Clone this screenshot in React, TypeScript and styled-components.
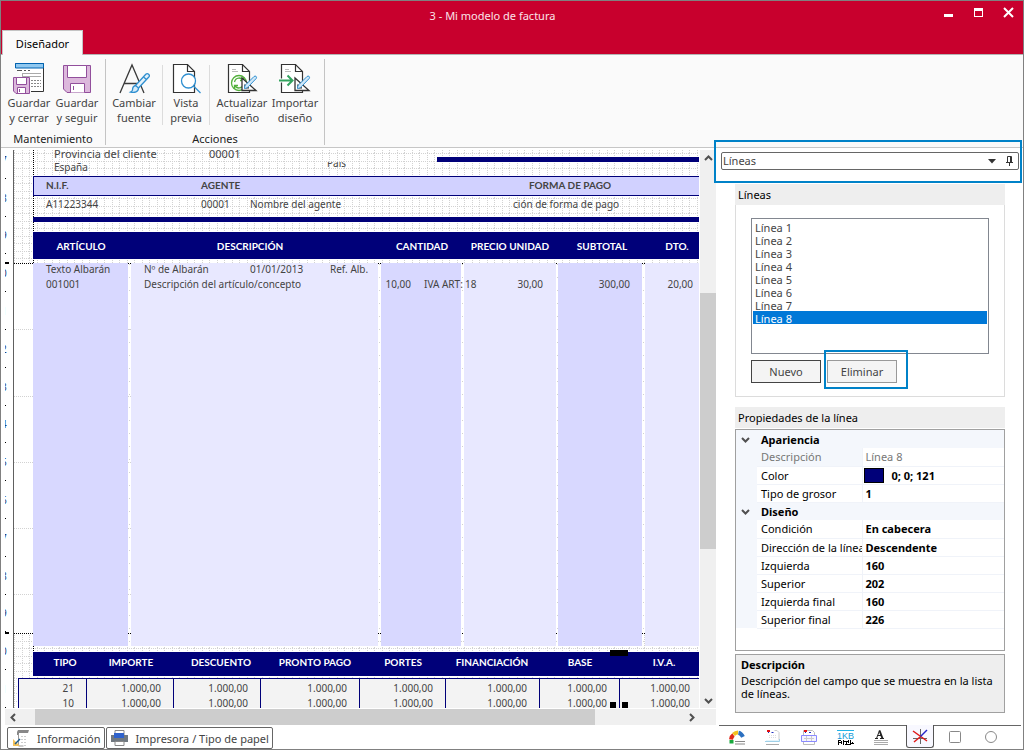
import React from "react";
import styled, { createGlobalStyle, css } from "styled-components";

const navy = "#000079";
const accent = "#0082c8";

const GlobalStyle = createGlobalStyle`
  *, *::before, *::after { box-sizing: border-box; }
  body {
    margin: 0;
    background: #fff;
    color: #444;
    font: 11px/15px "Noto Sans", "Open Sans", sans-serif;
  }
  button, select { font: inherit; color: inherit; }
  button { padding: 0; border: 0; background: none; }
  svg { display: block; }
`;

const Window = styled.div`
  display: flex;
  flex-direction: column;
  min-height: 100vh;
  border: 1px solid #808080;
  background: #fff;
`;

/* ---------- title bar ---------- */

const Header = styled.header`
  background: #c8002d;
  border-bottom: 1px solid #b4b4b4;
`;

const TitleBar = styled.div`
  display: flex;
  height: 29px;
`;

const Title = styled.h1`
  flex: 1;
  margin: 0;
  padding-left: 50px;
  font-size: 11px;
  font-weight: 400;
  line-height: 30px;
  text-align: center;
  color: #fbe4e9;
`;

const WindowControls = styled.div`
  display: flex;
  width: 89px;
`;

const ControlButton = styled.button`
  display: flex;
  justify-content: center;
  width: 30px;
  padding-top: 6px;
`;

const RibbonTab = styled.button`
  display: block;
  width: 81px;
  height: 25px;
  margin: 0 0 -1px 1px;
  border: 1px solid #c4c4c4;
  border-bottom: 0;
  background: #fafafa;
  color: #000;
`;

/* ---------- ribbon ---------- */

const Ribbon = styled.div`
  display: flex;
  padding: 4px 0 2px;
  background: #fafafa;
  border-bottom: 1px solid #c6c6c6;
`;

const RibbonGroup = styled.section<{ $width: number }>`
  display: flex;
  flex-direction: column;
  width: ${(p) => p.$width}px;
  height: 86px;
  border-right: 1px solid #c4c4c4;
`;

const GroupTools = styled.div`
  display: flex;
  flex: 1;
`;

const GroupLabel = styled.div`
  text-align: center;
  line-height: 13px;
  color: #222;
`;

const ToolButton = styled.button<{ $width: number; $divider?: boolean }>`
  display: flex;
  flex-direction: column;
  align-items: center;
  width: ${(p) => p.$width}px;
  height: 60px;
  margin-top: 6px;
  border-right: ${(p) => (p.$divider ? "1px solid #dcdcdc" : "0")};
  line-height: 15px;
  white-space: pre-line;
  svg { margin: -3px 0 1px; flex: none; }
`;

/* ---------- work area ---------- */

const WorkArea = styled.div`
  display: flex;
  flex: 1;
`;

const Designer = styled.main`
  display: flex;
  flex: 1;
  flex-direction: column;
  min-width: 0;
  padding: 2px 0 0 4px;
`;

const CanvasRow = styled.div`
  display: flex;
  flex: 1;
  min-height: 558px;
  border-bottom: 1px solid #fff;
`;

const Ruler = styled.div`
  position: relative;
  display: flex;
  width: 9px;
  overflow: hidden;
  border-right: 1px solid #606060;
`;

const RulerScale = styled.div`
  display: flex;
  flex-direction: column;
  height: 567px;
  margin: -9px 0 0 -4px;
`;

const RulerUnit = styled.div`
  display: flex;
  flex: 1;
  flex-direction: column;
  justify-content: center;
  align-items: flex-start;
  position: relative;
  width: 6px;
  font-size: 10px;
  line-height: 12px;
  color: #1c3c78;
  &::after {
    content: "";
    position: absolute;
    right: 1px;
    bottom: 0;
    width: 1px;
    height: 1px;
    background: #000;
  }
`;

const SectionMark = styled.i<{ $y: number }>`
  position: absolute;
  left: 0;
  top: ${(p) => p.$y}px;
  width: 4px;
  height: 2px;
  background: #000;
`;

const Canvas = styled.div`
  position: relative;
  flex: 1;
  overflow: hidden;
  background: #fff;
`;

const GridLayer = styled.svg`
  position: absolute;
  inset: 0;
  width: 100%;
  height: 100%;
`;

const Block = styled.div<{ $x: number; $y: number; $w?: number; $h: number; $fill: string }>`
  position: absolute;
  left: ${(p) => p.$x}px;
  top: ${(p) => p.$y}px;
  height: ${(p) => p.$h}px;
  background: ${(p) => p.$fill};
  ${(p) => (p.$w ? css`width: ${p.$w}px;` : css`right: 0;`)}
`;

const CaptionBand = styled(Block)`
  border: 1px solid ${navy};
  border-right: 0;
`;

type Align = "left" | "center" | "right";

const Field = styled.span<{ $x: number; $y: number; $align?: Align; $bold?: boolean; $light?: boolean; $large?: boolean }>`
  position: absolute;
  left: ${(p) => p.$x}px;
  top: ${(p) => p.$y}px;
  font-size: ${(p) => (p.$large ? 11 : 10)}px;
  line-height: 14px;
  font-weight: ${(p) => (p.$bold ? 700 : 400)};
  color: ${(p) => (p.$light ? "#fff" : "#444")};
  white-space: nowrap;
  ${(p) => p.$bold && css`font-family: Lato, "Noto Sans", sans-serif;`}
  ${(p) => p.$align === "center" && css`transform: translateX(-50%);`}
  ${(p) => p.$align === "right" && css`transform: translateX(-100%);`}
`;

const ClippedField = styled(Field)`
  height: 7px;
  overflow: hidden;
  line-height: 2px;
`;

const Totals = styled.table`
  position: absolute;
  left: 4px;
  right: 0;
  top: 528px;
  table-layout: fixed;
  width: calc(100% - 4px);
  border-collapse: collapse;
  border-top: 1px solid ${navy};
  border-left: 1px solid ${navy};
  background: #f3f3f3;
  td {
    height: 15px;
    padding: 0 12px 0 0;
    border-right: 1px solid ${navy};
    font-size: 10px;
    line-height: 15px;
    text-align: right;
  }
  td:last-child { padding-right: 9px; border-right: 0; }
  tr:first-child td { height: 17px; padding-top: 2px; }
`;

/* ---------- scroll bars ---------- */

const VScroll = styled.div`
  display: flex;
  flex-direction: column;
  justify-content: space-between;
  position: relative;
  width: 17px;
  border-left: 1px solid #fff;
  background: #f0f0f0;
`;

const HScroll = styled.div`
  display: flex;
  justify-content: space-between;
  position: relative;
  height: 16px;
  padding-right: 17px;
  background: #f0f0f0;
`;

const ScrollButton = styled.button`
  display: flex;
  align-items: center;
  justify-content: center;
  width: 16px;
  height: 16px;
`;

const VThumb = styled.div`
  position: absolute;
  left: 0;
  right: 0;
  top: 143px;
  height: 256px;
  background: #cdcdcd;
`;

const HThumb = styled.div`
  position: absolute;
  top: 0;
  bottom: 0;
  left: 30px;
  width: 560px;
  background: #cdcdcd;
`;

const PageTabs = styled.nav`
  display: flex;
  gap: 1px;
  padding: 2px 0 0 2px;
`;

const PageTab = styled.button`
  display: flex;
  align-items: center;
  gap: 8px;
  height: 22px;
  padding: 0 3px 0 4px;
  border: 1px solid #666;
  border-radius: 2px;
  line-height: 15px;
`;

/* ---------- side panel ---------- */

const SidePanel = styled.aside`
  display: flex;
  flex-direction: column;
  width: 307px;
  padding: 4px 2px 0 3px;
`;

const ComboFrame = styled.div`
  position: relative;
  margin: 0 2px;
  &::before {
    content: "";
    position: absolute;
    inset: -12px -3px -13px -7px;
    border: 2px solid ${accent};
    pointer-events: none;
  }
`;

const Combo = styled.div`
  display: flex;
  align-items: center;
  gap: 4px;
  height: 18px;
  border: 1px solid #666;
  border-radius: 2px;
  background: #fff;
`;

const ComboSelect = styled.select`
  flex: 1;
  height: 16px;
  padding: 0 1px;
  border: 0;
  background: none;
  appearance: none;
  line-height: 16px;
`;

const PinButton = styled.button`
  display: flex;
  justify-content: center;
  width: 18px;
`;

const Group = styled.section`
  margin: 14px 16px 0;
`;

const GroupTitle = styled.h2`
  margin: 0;
  padding-left: 3px;
  background: #eee;
  color: #000;
  font-size: 11px;
  font-weight: 400;
  line-height: 21px;
`;

const GroupBody = styled.div`
  padding: 13px 15px;
  border: 1px solid #dcdcdc;
  border-top: 0;
`;

const LineList = styled.select`
  display: block;
  width: 100%;
  height: 136px;
  padding: 1px;
  border: 1px solid #828790;
  border-radius: 0;
  outline: 0;
  background: #fff;
  overflow: hidden;
  option {
    height: 13px;
    min-height: 13px;
    padding: 0 2px;
    line-height: 13px;
    color: #444;
  }
  option:checked {
    background: #0078d7 linear-gradient(#0078d7, #0078d7);
    color: #fff;
  }
`;

const ButtonRow = styled.div`
  display: flex;
  gap: 6px;
  margin-top: 6px;
`;

const PushButton = styled.button<{ $muted?: boolean }>`
  width: 70px;
  height: 23px;
  border: 1px solid ${(p) => (p.$muted ? "#999" : "#444")};
  background: #f4f4f4;
`;

const Highlight = styled.div`
  position: relative;
  &::before {
    content: "";
    position: absolute;
    inset: -10px -11px -6px -3px;
    border: 2px solid ${accent};
    pointer-events: none;
  }
`;

const PropertyGroup = styled(Group)`
  margin-top: 10px;
`;

const PropertyFrame = styled.div`
  height: 222px;
  margin-top: 1px;
  border: 1px solid #a0a0a0;
`;

const PropertyTable = styled.table`
  width: 100%;
  table-layout: fixed;
  border-collapse: collapse;
  color: #000;
  line-height: 17px;
  text-align: left;
  th, td { height: 18px; padding: 0; overflow: hidden; white-space: nowrap; }
  col:nth-child(1) { width: 21px; }
  col:nth-child(2) { width: 105px; }
`;

const CategoryRow = styled.tr`
  background: #f4f7fc;
  th { padding-left: 4px; font-weight: 700; }
  td svg { margin: 0 5px; }
`;

const PropertyRow = styled.tr<{ $readOnly?: boolean }>`
  color: ${(p) => (p.$readOnly ? "#777" : "#000")};
  td:first-child { background: #f4f7fc; }
  th, td + th + td { border-bottom: 1px solid #f0f3f9; }
  th {
    padding-left: 4px;
    border-right: 1px solid #f0f3f9;
    font-weight: 400;
    background: ${(p) => (p.$readOnly ? "#f4f7fc" : "#fff")};
  }
  td + th + td { padding-left: 3px; font-weight: ${(p) => (p.$readOnly ? 400 : 700)}; }
`;

const ColorValue = styled.span`
  display: flex;
  align-items: center;
  gap: 8px;
  margin-left: -2px;
  &::before {
    content: "";
    width: 20px;
    height: 15px;
    border: 1px solid #000;
    background: ${navy};
  }
`;

const HelpBox = styled.div`
  height: 59px;
  margin-top: 3px;
  padding: 2px 5px;
  border: 1px solid #a0a0a0;
  background: #eee;
  color: #000;
  line-height: 13px;
  h3 { margin: 0 0 2px; font-size: 11px; line-height: 15px; }
  p { margin: 0; }
`;

const ToolTabs = styled.nav`
  display: flex;
  height: 24px;
  margin-top: auto;
  border-top: 1px solid #666;
`;

const ToolTab = styled.button<{ $active?: boolean }>`
  display: flex;
  align-items: center;
  justify-content: center;
  width: 36px;
  height: 22px;
  ${(p) => p.$active && css`
    width: 28px;
    height: 23px;
    margin: -1px 3px 0 7px;
    border: 1px solid #555;
    border-top: 0;
    border-radius: 0 0 3px 3px;
    background: #f8f8ff;
  `}
`;

/* ---------- icons ---------- */

const SaveCloseIcon = () => (
  <svg width="32" height="32" viewBox="0 0 32 32" fill="none">
    <path d="M2.500 6V1.500h28v28H18" fill="#fff" stroke="#333" />
    <path d="M2.500 1.500h28v4.500h-28z" fill="#90c8f0" stroke="#0063b1" />
    <path d="M4 8.500h5M11 8.500h2M15 8.500h2" stroke="#555" />
    <path d="M9 11.500h19M9.500 11v4M9 14.500h19" stroke="#aaa" />
    <path d="M18 18.500h10M18 21.500h10M18 24.500h10" stroke="#888" strokeDasharray="2 1" />
    <path d="M.500 15.500h16v16H3L.500 29z" fill="#dcb8dc" stroke="#924f9c" />
    <path d="M3.500 15.500h10v7h-10z" fill="#fff" stroke="#924f9c" />
    <path d="M4.500 31v-5.500h8V31" fill="#fff" stroke="#924f9c" />
    <path d="M6.500 27v3" stroke="#924f9c" />
  </svg>
);

const SaveIcon = () => (
  <svg width="32" height="32" viewBox="0 0 32 32" fill="none" stroke="#924f9c">
    <path d="M2.500 3.500h27v27H6L2.500 27z" fill="#dcb8dc" />
    <path d="M6.500 3.500h19v12h-19z" fill="#fff" />
    <path d="M9.500 30.500v-9h14v9" fill="#fff" />
    <path d="M12.500 24v4" />
  </svg>
);

const FontIcon = () => (
  <svg width="32" height="32" viewBox="0 0 32 32" fill="none">
    <path d="M2 31 14 3l12 28M6.500 21.500h13" stroke="#3a3a3a" strokeWidth="1.300" />
    <path d="M17.500 23.500 27.800 12.300c1.800-1.800 4.700.700 3 2.700L20.500 26" fill="#e4f2fb" stroke="#2f8fd0" strokeWidth="1.300" />
    <path d="M17.500 23.500c-2 .500-3 2.500-3 4.500 0 1-1 1.500-2 2 4 1 8 0 8-4zM25.500 15l3 2.500" fill="#d5ebfa" stroke="#2f8fd0" strokeWidth="1.300" />
  </svg>
);

const PreviewIcon = () => (
  <svg width="32" height="32" viewBox="0 0 32 32" fill="none">
    <path d="M3.500 2.500h14l7 7v21h-21z" fill="#fff" stroke="#333" strokeWidth="1.200" />
    <path d="M17.500 2.500v7h7" stroke="#333" strokeWidth="1.200" />
    <circle cx="18.500" cy="19" r="7" fill="#fff" stroke="#2f8fd0" strokeWidth="1.300" />
    <path d="m23.500 24 7 7" stroke="#2f8fd0" strokeWidth="1.300" />
  </svg>
);

const SheetOutline = () => (
  <>
    <path d="M2.500 2.500h14l7 7v21h-21z" fill="#fff" stroke="#333" strokeWidth="1.200" />
    <path d="M16.500 2.500v7h7" stroke="#333" strokeWidth="1.200" />
    <path d="M6 7.500h4M6 9.500h6" stroke="#bbb" />
  </>
);

const PenAndSquare = () => (
  <>
    <path d="M16 16v12.500h14z" fill="#fff" stroke="#333" strokeWidth="1.300" />
    <path d="M18.800 22.500v3.500h4z" stroke="#333" />
    <path d="M18.500 26.500c0-2 .500-3.500 2-4.500l7.500-7.500c1.500-1.300 3.400.500 2.200 2L22.500 24.500c-1 1.200-2.400 1.800-4 2z" fill="#cfe7f8" stroke="#2f8fd0" />
  </>
);

const RefreshIcon = () => (
  <svg width="32" height="32" viewBox="0 0 32 32" fill="none">
    <SheetOutline />
    <circle cx="13" cy="21" r="7.500" fill="#fff" stroke="#53b03c" strokeWidth="1.300" />
    <path d="M8.500 20c1-5 7-5 8.500-1.500M17.500 15v3.500H14M17.500 22c-1 5-7 5-8.500 1.500M8.500 27v-3.500H12" stroke="#53b03c" strokeWidth="1.300" />
    <PenAndSquare />
  </svg>
);

const ImportIcon = () => (
  <svg width="32" height="32" viewBox="0 0 32 32" fill="none">
    <SheetOutline />
    <path d="M0 18.500h13M8.500 13.500l5 5-5 5" stroke="#fff" strokeWidth="4" />
    <path d="M0 18.500h13M8.500 13.500l5 5-5 5" stroke="#33a35f" strokeWidth="2" />
    <PenAndSquare />
  </svg>
);

const arrowPaths = {
  up: "M1 6l3.500-3.500L8 6",
  down: "M1 3l3.500 3.500L8 3",
  left: "M6 1 2.500 4.500 6 8",
  right: "M3 1l3.500 3.500L3 8",
};

const Arrow = ({ to }: { to: keyof typeof arrowPaths }) => (
  <svg width="9" height="9" viewBox="0 0 9 9" fill="none">
    <path d={arrowPaths[to]} stroke="#505050" strokeWidth="2" />
  </svg>
);

const InfoIcon = () => (
  <svg width="17" height="17" viewBox="0 0 17 17" fill="none">
    <path d="M6 0h11l-1 3H7v2H5V2z" fill="#888" />
    <path d="M6.500 4v12h5" stroke="#999" />
    <path d="M9 6.500h6M9 9.500h6M9 12.500h6M9 15.500h6" stroke="#ccc" strokeDasharray="2 1" />
    <path d="M1 9v7h7z" fill="#f3c25b" />
    <path d="m3 14 5-5" stroke="#1d5c8c" strokeWidth="1.500" />
  </svg>
);

const PrinterIcon = () => (
  <svg width="17" height="16" viewBox="0 0 17 16">
    <path d="M4 .500h9V5H4z" fill="#fff" stroke="#888" />
    <path d="M0 5h17v7H0z" fill="#707880" />
    <path d="M3 3h10v5H3z" fill="#2f62cc" />
    <path d="M4 11.500h9v4H4z" fill="#fff" stroke="#888" />
  </svg>
);

const PinIcon = () => (
  <svg width="9" height="10" viewBox="0 0 9 10" fill="none" stroke="#333">
    <path d="M2.500 6V.500h4V6M1 6.500h7M4.500 7v3" />
    <path d="M5.500 1v5" />
  </svg>
);

const GaugeIcon = () => (
  <svg width="16" height="15" viewBox="0 0 16 15" fill="none">
    <path d="M2.500 13.500V10" stroke="#18a83c" strokeWidth="4" />
    <path d="M2 9.500c.300-2 1-3.500 2.500-4.500" stroke="#e02818" strokeWidth="4" />
    <path d="M4.500 4.500C6 3 7.500 2.500 9 2.500" stroke="#f2c020" strokeWidth="4" />
    <path d="M9.500 2.800c2.500.500 3.500 2 4.500 4" stroke="#2c70c0" strokeWidth="4" />
    <path d="M6 11.500h10M6 14h10" stroke="#888" />
  </svg>
);

const HeaderSheetIcon = () => (
  <svg width="16" height="15" viewBox="0 0 16 15" fill="none">
    <path d="M2 1h3" stroke="#e01010" strokeWidth="2" />
    <path d="M3.500 2v1M6.500 2.500h2" stroke="#2030c0" />
    <path d="M9.500.500H12l2 2V10" stroke="#ccc" />
    <path d="M4 5.500h8M4 7.500h8" stroke="#ddd" strokeDasharray="1 1" />
    <path d="M0 11.500h14.500V9" stroke="#9fd0e8" />
    <path d="M1 10.500h13" stroke="#e4f4fb" />
    <path d="M1 14.500h13" stroke="#aaa" />
  </svg>
);

const BandSheetIcon = () => (
  <svg width="16" height="15" viewBox="0 0 16 15" fill="none">
    <path d="M2.500.500h9l2 2v12h-11z" fill="#fff" stroke="#bbb" />
    <path d="M3 1h3" stroke="#e01010" strokeWidth="2" />
    <path d="M4.500 2v1M8 2.500h2" stroke="#2030c0" />
    <path d="M.500 5.500h15v6H.500z" fill="#f4f4ff" stroke="#8a8aff" />
    <path d="M3 8.500h10M5.500 6v5M10.500 6v5" stroke="#ccc" />
  </svg>
);

const BarcodeIcon = () => (
  <svg width="17" height="15" viewBox="0 0 17 15" fill="none">
    <path d="M0 .500h17" stroke="#22b4e8" />
    <text x="8.500" y="9" textAnchor="middle" fontFamily="Liberation Sans, sans-serif" fontSize="9" fill="#0f9bd7" stroke="none">1KB</text>
    <g shapeRendering="crispEdges" stroke="#000">
      <path d="M1.500 10v5M4.500 11v3M6.500 10v5M9.500 12v3M11.500 10v3M13.500 10v5M15.500 12v2" />
      <path d="M1 10.500h3M1 12.500h3M7 11.500h4M8 14.500h5M14 13.500h3" />
    </g>
  </svg>
);

const TextIcon = () => (
  <svg width="15" height="15" viewBox="0 0 15 15" fill="none">
    <path d="M1 8.500h3M6 8.500h4M2.500 8.500 5.500.500M3.500 5.500h4" stroke="#222" />
    <path d="m5.500.500 3 8" stroke="#222" strokeWidth="2" />
    <path d="M0 10.500h14M0 12.500h14M0 14.500h14" stroke="#aaa" />
  </svg>
);

const LinesIcon = () => (
  <svg width="16" height="15" viewBox="0 0 16 15" fill="none">
    <path d="M8.500 0v15M1 9.500h14" stroke="#666" />
    <path d="m1 2 14 10" stroke="#e01818" strokeWidth="1.500" />
    <path d="M8 8 2 13" stroke="#e01818" strokeWidth="1.500" />
    <path d="M15 1 8.500 7.500" stroke="#2424c8" strokeWidth="1.500" />
  </svg>
);

const BoxIcon = () => (
  <svg width="12" height="12" viewBox="0 0 12 12" fill="none" stroke="#888">
    <rect x=".500" y=".500" width="11" height="11" rx="1" />
  </svg>
);

const CircleIcon = () => (
  <svg width="12" height="12" viewBox="0 0 12 12" fill="none" stroke="#888">
    <circle cx="6" cy="6" r="5.500" />
  </svg>
);

/* ---------- data ---------- */

const dark = "#d8d8ff";
const pale = "#e8e8ff";

const columns = [
  { x: 19, w: 95, fill: dark },
  { x: 117, w: 247, fill: pale },
  { x: 367, w: 80, fill: dark },
  { x: 450, w: 92, fill: pale },
  { x: 544, w: 84, fill: dark },
  { x: 631, fill: pale },
];

const lineHeadings: [string, number][] = [
  ["ARTÍCULO", 67], ["DESCRIPCIÓN", 236], ["CANTIDAD", 408],
  ["PRECIO UNIDAD", 496], ["SUBTOTAL", 588], ["DTO.", 663],
];

const totalHeadings: [string, number][] = [
  ["TIPO", 51], ["IMPORTE", 117], ["DESCUENTO", 207], ["PRONTO PAGO", 301],
  ["PORTES", 389], ["FINANCIACIÓN", 478], ["BASE", 566], ["I.V.A.", 650],
];

const fields: { text: string; x: number; y: number; align?: Align; large?: boolean; bold?: boolean }[] = [
  { text: "Provincia del cliente", x: 40, y: -3, large: true },
  { text: "00001", x: 195, y: -3, large: true },
  { text: "España", x: 40, y: 10 },
  { text: "N.I.F.", x: 32, y: 28, bold: true },
  { text: "AGENTE", x: 187, y: 28, bold: true },
  { text: "FORMA DE PAGO", x: 556, y: 28, bold: true, align: "center" },
  { text: "A11223344", x: 32, y: 47 },
  { text: "00001", x: 187, y: 47 },
  { text: "Nombre del agente", x: 236, y: 47 },
  { text: "ción de forma de pago", x: 499, y: 47 },
  { text: "Texto Albarán", x: 32, y: 112 },
  { text: "Nº de Albarán", x: 130, y: 112 },
  { text: "01/01/2013", x: 236, y: 112 },
  { text: "Ref. Alb.", x: 316, y: 112 },
  { text: "001001", x: 32, y: 127 },
  { text: "Descripción del artículo/concepto", x: 130, y: 127 },
  { text: "10,00", x: 397, y: 127, align: "right" },
  { text: "IVA ART:", x: 410, y: 127 },
  { text: "18", x: 451, y: 127 },
  { text: "30,00", x: 529, y: 127, align: "right" },
  { text: "300,00", x: 616, y: 127, align: "right" },
  { text: "20,00", x: 679, y: 127, align: "right" },
];

const totalWidths = [68, 87, 87, 99, 86, 94, 80];
const rulerDigits = "789012345678901".split("");

const properties = [
  {
    name: "Apariencia",
    items: [
      { label: "Descripción", value: "Línea 8", readOnly: true },
      { label: "Color", value: <ColorValue>0; 0; 121</ColorValue> },
      { label: "Tipo de grosor", value: "1" },
    ],
  },
  {
    name: "Diseño",
    items: [
      { label: "Condición", value: "En cabecera" },
      { label: "Dirección de la línea", value: "Descendente" },
      { label: "Izquierda", value: "160" },
      { label: "Superior", value: "202" },
      { label: "Izquierda final", value: "160" },
      { label: "Superior final", value: "226" },
    ],
  },
];

const toolTabs = [
  { name: "Gráficos", icon: <GaugeIcon /> },
  { name: "Cabecera", icon: <HeaderSheetIcon /> },
  { name: "Secciones", icon: <BandSheetIcon /> },
  { name: "Código de barras", icon: <BarcodeIcon /> },
  { name: "Textos", icon: <TextIcon /> },
  { name: "Líneas", icon: <LinesIcon />, active: true },
  { name: "Rectángulos", icon: <BoxIcon /> },
  { name: "Círculos", icon: <CircleIcon /> },
];

/* ---------- views ---------- */

const InvoiceCanvas = () => (
  <Canvas>
    <GridLayer shapeRendering="crispEdges">
      <defs>
        <pattern id="grid" width="15" height="15" patternUnits="userSpaceOnUse" y="3">
          <path d="M.500 0v15M8.500 0v15M0 .500h15M0 8.500h15" stroke="#d2d2d2" strokeDasharray="1 1" />
        </pattern>
      </defs>
      <rect width="100%" height="113" fill="url(#grid)" />
      <rect y="484" width="100%" height="80" fill="url(#grid)" />
      {[179, 246, 312, 378, 444].map((y) => (
        <path key={y} d={`M0 ${y}.500h19M114 ${y}.500h3`} stroke="#d2d2d2" strokeDasharray="1 1" />
      ))}
      {[115, 365, 448, 543, 629].map((x) => (
        <path key={x} d={`M${x}.500 114v370`} stroke="#d2d2d2" strokeDasharray="1 12" />
      ))}
      <path d="M0 113.500h2000M0 483.500h2000M19.500 0v113M19.500 496v12" stroke="#000" strokeDasharray="1 1" />
    </GridLayer>

    <Block $x={423} $y={7} $h={5} $fill={navy} />
    <CaptionBand $x={19} $y={26} $h={20} $fill="#d1d1ff" />
    <Block $x={19} $y={67} $h={5} $fill={navy} />
    <Block $x={19} $y={82} $h={27} $fill={navy} />
    {columns.map((c) => (
      <Block key={c.x} $x={c.x} $y={113} $w={c.w} $h={383} $fill={c.fill} />
    ))}
    <Block $x={19} $y={502} $h={24} $fill={navy} />

    {fields.map((f) => (
      <Field key={f.text + f.x + f.y} $x={f.x} $y={f.y} $align={f.align} $large={f.large} $bold={f.bold}>
        {f.text}
      </Field>
    ))}
    <ClippedField $x={313} $y={12}>País</ClippedField>
    {lineHeadings.map(([text, x]) => (
      <Field key={text} $x={x} $y={89} $align="center" $bold $light>{text}</Field>
    ))}
    {totalHeadings.map(([text, x]) => (
      <Field key={text} $x={x} $y={505} $align="center" $bold $light>{text}</Field>
    ))}

    <Totals>
      <colgroup>
        {totalWidths.map((w, i) => <col key={i} width={w} />)}
        <col />
      </colgroup>
      <tbody>
        {["21", "10"].map((rate) => (
          <tr key={rate}>
            <td>{rate}</td>
            {totalWidths.map((_, i) => <td key={i}>1.000,00</td>)}
          </tr>
        ))}
      </tbody>
    </Totals>

    <Block $x={596} $y={500} $w={18} $h={6} $fill="#000" />
    <Block $x={596} $y={552} $w={6} $h={6} $fill="#000" />
    <Block $x={608} $y={552} $w={6} $h={6} $fill="#000" />
  </Canvas>
);

const PropertyGrid = () => (
  <PropertyTable>
    <colgroup><col /><col /><col /></colgroup>
    {properties.map((group) => (
      <tbody key={group.name}>
        <CategoryRow>
          <td><Arrow to="down" /></td>
          <th colSpan={2}>{group.name}</th>
        </CategoryRow>
        {group.items.map((item) => (
          <PropertyRow key={item.label} $readOnly={"readOnly" in item}>
            <td />
            <th scope="row">{item.label}</th>
            <td>{item.value}</td>
          </PropertyRow>
        ))}
      </tbody>
    ))}
  </PropertyTable>
);

export default function App() {
  return (
    <Window>
      <GlobalStyle />
      <Header>
        <TitleBar>
          <Title>3 - Mi modelo de factura</Title>
          <WindowControls>
            <ControlButton aria-label="Minimizar">
              <svg width="11" height="11"><path d="M1 7h9v3H1z" fill="#fff" /></svg>
            </ControlButton>
            <ControlButton aria-label="Maximizar">
              <svg width="11" height="11"><path d="M1 1h9v9H1zM2 4v5h7V4z" fill="#fff" fillRule="evenodd" /></svg>
            </ControlButton>
            <ControlButton aria-label="Cerrar">
              <svg width="11" height="11"><path d="m1 1 9 9M10 1l-9 9" stroke="#fff" strokeWidth="2" /></svg>
            </ControlButton>
          </WindowControls>
        </TitleBar>
        <RibbonTab>Diseñador</RibbonTab>
      </Header>

      <Ribbon>
        <RibbonGroup $width={105}>
          <GroupTools>
            <ToolButton $width={56}><SaveCloseIcon />{"Guardar\ny cerrar"}</ToolButton>
            <ToolButton $width={40}><SaveIcon />{"Guardar\ny seguir"}</ToolButton>
          </GroupTools>
          <GroupLabel>Mantenimiento</GroupLabel>
        </RibbonGroup>
        <RibbonGroup $width={219}>
          <GroupTools>
            <ToolButton $width={57} $divider><FontIcon />{"Cambiar\nfuente"}</ToolButton>
            <ToolButton $width={47} $divider><PreviewIcon />{"Vista\nprevia"}</ToolButton>
            <ToolButton $width={64}><RefreshIcon />{"Actualizar\ndiseño"}</ToolButton>
            <ToolButton $width={42}><ImportIcon />{"Importar\ndiseño"}</ToolButton>
          </GroupTools>
          <GroupLabel>Acciones</GroupLabel>
        </RibbonGroup>
      </Ribbon>

      <WorkArea>
        <Designer>
          <CanvasRow>
            <Ruler>
              <RulerScale>
                {rulerDigits.map((d, i) => <RulerUnit key={i}>{d}</RulerUnit>)}
              </RulerScale>
              <SectionMark $y={112} />
              <SectionMark $y={482} />
            </Ruler>
            <InvoiceCanvas />
            <VScroll>
              <ScrollButton aria-label="Subir"><Arrow to="up" /></ScrollButton>
              <VThumb />
              <ScrollButton aria-label="Bajar"><Arrow to="down" /></ScrollButton>
            </VScroll>
          </CanvasRow>
          <HScroll>
            <ScrollButton aria-label="Izquierda"><Arrow to="left" /></ScrollButton>
            <HThumb />
            <ScrollButton aria-label="Derecha"><Arrow to="right" /></ScrollButton>
          </HScroll>
          <PageTabs>
            <PageTab><InfoIcon />Información</PageTab>
            <PageTab><PrinterIcon />Impresora / Tipo de papel</PageTab>
          </PageTabs>
        </Designer>

        <SidePanel>
          <ComboFrame>
            <Combo>
              <ComboSelect aria-label="Tipo de elemento" defaultValue="Líneas">
                <option>Líneas</option>
              </ComboSelect>
              <svg width="8" height="5"><path d="M0 0h8L4 4.500z" fill="#333" /></svg>
              <PinButton aria-label="Fijar panel"><PinIcon /></PinButton>
            </Combo>
          </ComboFrame>

          <Group>
            <GroupTitle id="lines-title">Líneas</GroupTitle>
            <GroupBody>
              <LineList size={10} aria-labelledby="lines-title" defaultValue="Línea 8">
                {[1, 2, 3, 4, 5, 6, 7, 8].map((n) => <option key={n}>{`Línea ${n}`}</option>)}
              </LineList>
              <ButtonRow>
                <PushButton>Nuevo</PushButton>
                <Highlight><PushButton $muted>Eliminar</PushButton></Highlight>
              </ButtonRow>
            </GroupBody>
          </Group>

          <PropertyGroup>
            <GroupTitle>Propiedades de la línea</GroupTitle>
            <PropertyFrame><PropertyGrid /></PropertyFrame>
            <HelpBox>
              <h3>Descripción</h3>
              <p>Descripción del campo que se muestra en la lista de líneas.</p>
            </HelpBox>
          </PropertyGroup>

          <ToolTabs>
            {toolTabs.map((t) => (
              <ToolTab key={t.name} $active={t.active} aria-label={t.name}>{t.icon}</ToolTab>
            ))}
          </ToolTabs>
        </SidePanel>
      </WorkArea>
    </Window>
  );
}
